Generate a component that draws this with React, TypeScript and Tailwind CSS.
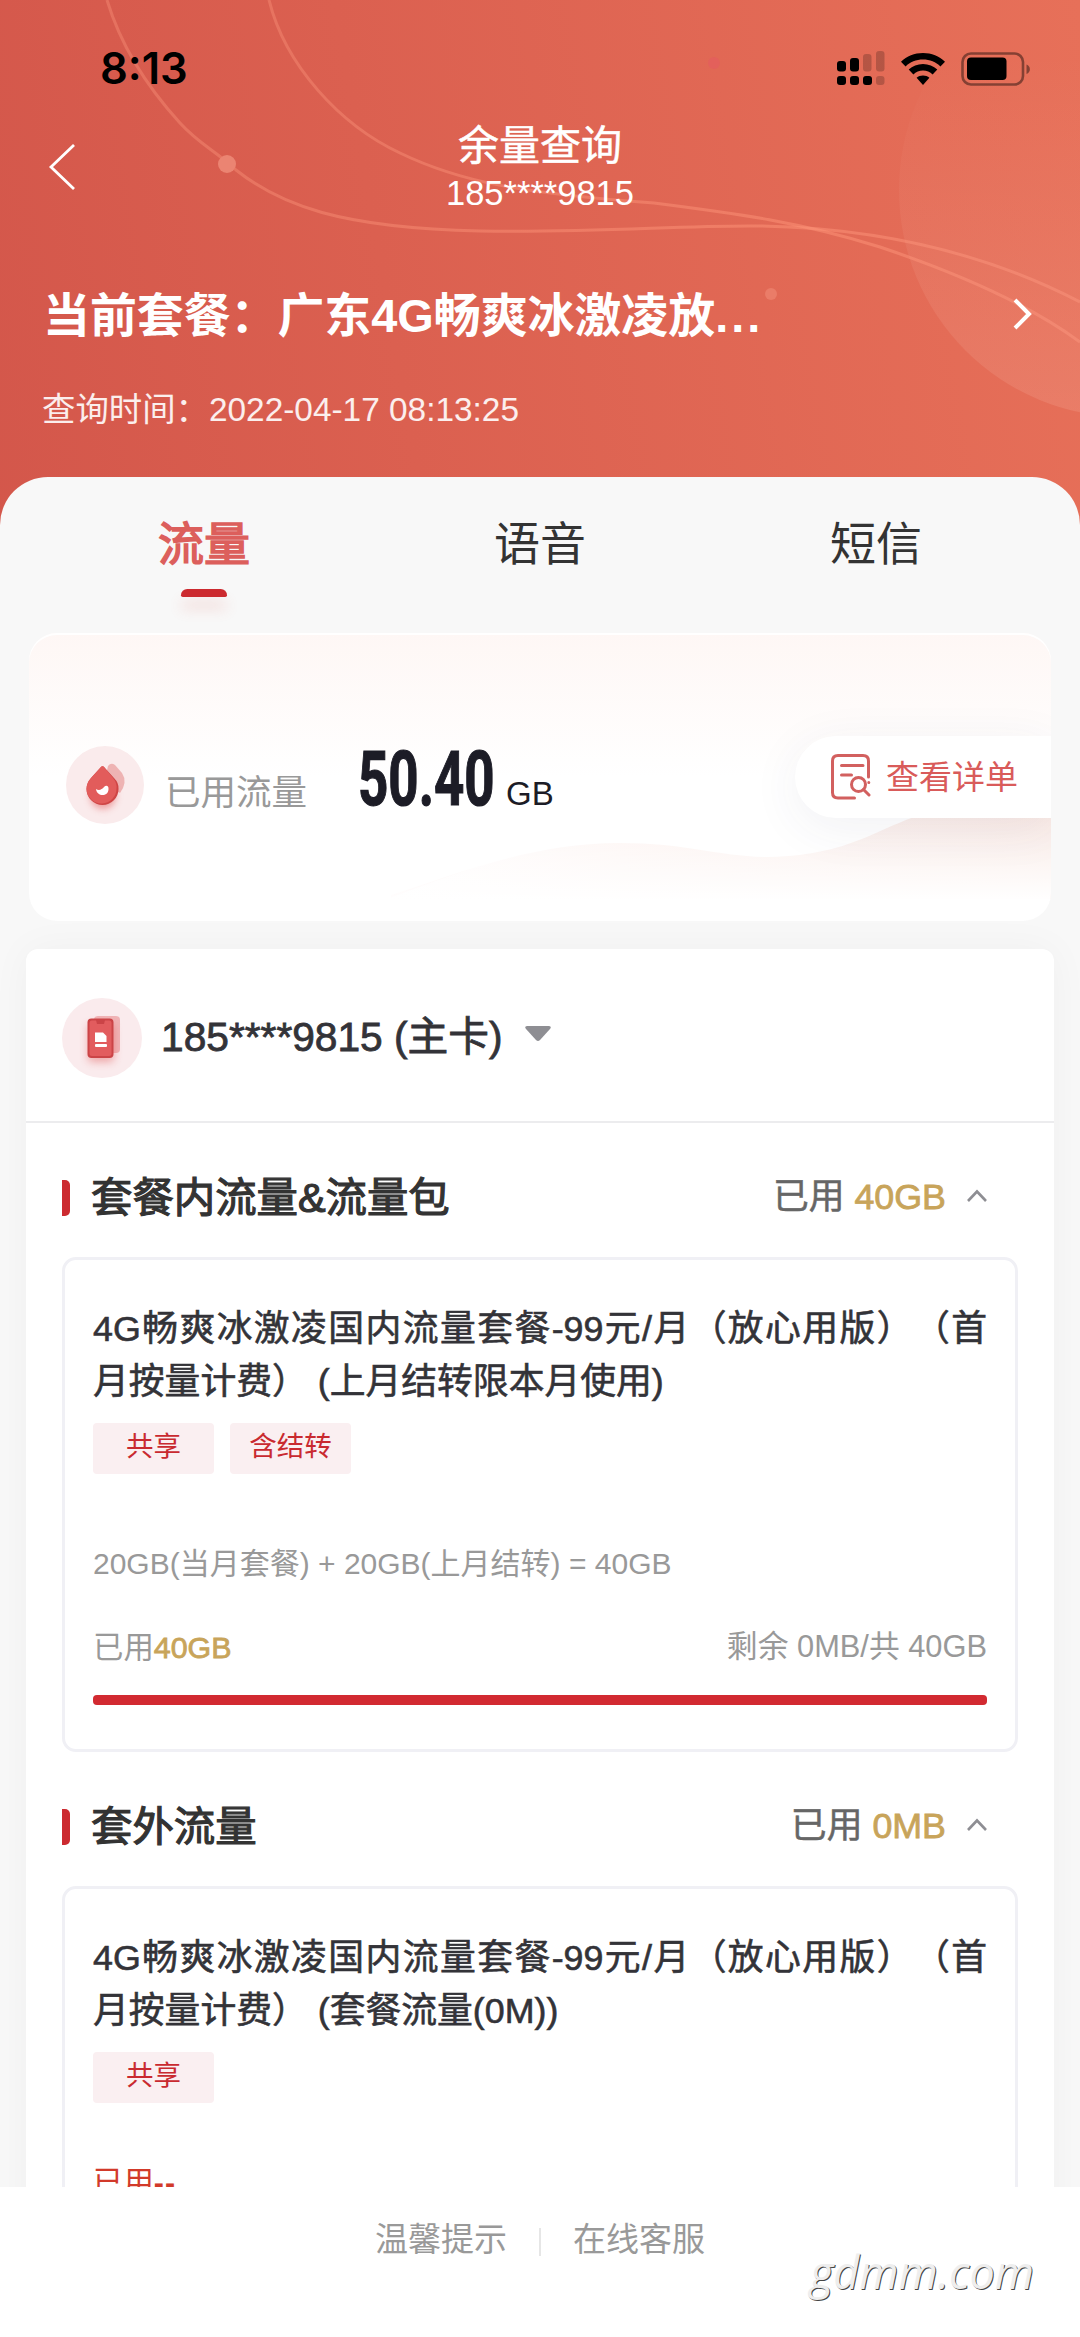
import { Fragment } from 'react';
import type { ReactNode } from 'react';

type Plan = {
    name: string;
    tags: string[];
    formula?: string;
    used: string;
    remain?: string;
    percent?: number;
};

type Section = {
    title: string;
    used: string;
    plan: Plan;
};

const tabs = ['流量', '语音', '短信'];

const sections: Section[] = [
    {
        title: '套餐内流量&流量包',
        used: '40GB',
        plan: {
            name: '4G畅爽冰激凌国内流量套餐-99元/月（放心用版）（首月按量计费） (上月结转限本月使用)',
            tags: ['共享', '含结转'],
            formula: '20GB(当月套餐) + 20GB(上月结转) = 40GB',
            used: '40GB',
            remain: '剩余 0MB/共 40GB',
            percent: 100,
        },
    },
    {
        title: '套外流量',
        used: '0MB',
        plan: {
            name: '4G畅爽冰激凌国内流量套餐-99元/月（放心用版）（首月按量计费） (套餐流量(0M))',
            tags: ['共享'],
            used: '--',
        },
    },
];

const HeaderArt = () => (
    <svg className="absolute left-0 top-0" width="1080" height="530" viewBox="0 0 1080 530" fill="none">
        <defs>
            <linearGradient id="orb" x1="0" y1="0" x2="0" y2="1">
                <stop offset="0.2" stopColor="#ffd0c0" stopOpacity="0" />
                <stop offset="1" stopColor="#ffd0c0" stopOpacity="0.15" />
            </linearGradient>
            <linearGradient id="trail" x1="0" y1="0" x2="1" y2="0">
                <stop offset="0" stopColor="#ff9a80" stopOpacity="0.35" />
                <stop offset="0.7" stopColor="#ff9478" stopOpacity="0.5" />
                <stop offset="1" stopColor="#ff9c84" stopOpacity="0.4" />
            </linearGradient>
        </defs>
        <circle cx="1126" cy="190" r="227" fill="url(#orb)" />
        <path
            d="M107 0C122 50 150 90 180 123C200 145 215 150 236 170C280 205 340 228 480 231C600 233 680 225 760 226C870 228 980 250 1080 302"
            stroke="url(#trail)"
            strokeWidth="3"
        />
        <path
            d="M269 0C285 65 340 125 400 153C460 182 520 193 654 203C740 214 800 222 880 247C960 274 1030 305 1080 342"
            stroke="url(#trail)"
            strokeWidth="3"
        />
        <circle cx="227" cy="164" r="9" fill="#eb8472" />
        <circle cx="771" cy="294" r="6" fill="#ea7c68" />
        <circle cx="714" cy="63" r="6" fill="#e3605b" />
    </svg>
);

const SignalIcon = () => (
    <svg width="48" height="36" viewBox="0 0 48 36">
        <rect x="0" y="10" width="9" height="10.5" rx="3" />
        <rect x="13" y="7" width="9" height="13.5" rx="3" />
        <g opacity="0.2">
            <rect x="26" y="3" width="8.5" height="17.5" rx="3" />
            <rect x="39" y="0" width="8.5" height="20.5" rx="3" />
            <rect x="39" y="25" width="8.5" height="9" rx="3" />
        </g>
        <rect x="0" y="25" width="9" height="9" rx="3" />
        <rect x="13" y="25" width="9" height="9" rx="3" />
        <rect x="26" y="25" width="9" height="9" rx="3" />
    </svg>
);

const WifiIcon = () => (
    <svg width="46" height="34" viewBox="0 0 46 34">
        <path d="M23 1C14.500 1 6.700 4.300 1 9.700L5.600 14.500C10 10.200 16.200 7.600 23 7.600C29.800 7.600 36 10.200 40.400 14.500L45 9.700C39.300 4.300 31.500 1 23 1Z" />
        <path d="M23 12C17.500 12 12.500 14.100 8.700 17.600L13.400 22.400C15.900 20 19.300 18.600 23 18.600C26.700 18.600 30.100 20 32.600 22.400L37.300 17.600C33.500 14.100 28.500 12 23 12Z" />
        <path d="M23 23.500C20.500 23.500 18.300 24.300 16.600 25.800L23 33L29.400 25.800C27.700 24.300 25.500 23.500 23 23.500Z" />
    </svg>
);

const BatteryIcon = () => (
    <svg width="70" height="34" viewBox="0 0 70 34">
        <rect x="1.500" y="1.500" width="60.500" height="31" rx="8.500" fill="none" stroke="#000" strokeOpacity="0.42" strokeWidth="2.600" />
        <rect x="6" y="5.500" width="39.500" height="22.500" rx="4" />
        <path d="M65.500 12.500C70 14 70 20.500 65.500 22Z" opacity="0.42" />
    </svg>
);

const DropIcon = () => (
    <svg width="78" height="78" viewBox="0 0 78 78" className="mt-[113px]">
        <defs>
            <filter id="dropGlow" x="-50%" y="-50%" width="200%" height="200%">
                <feGaussianBlur stdDeviation="3.500" />
            </filter>
        </defs>
        <circle cx="39" cy="39" r="39" fill="#faebec" />
        <path d="M42 20Q45 16 49 19L56 27Q62 36 54 47L38 38Z" fill="#eeb3b3" />
        <circle cx="37" cy="50" r="13" fill="#e05555" opacity="0.5" filter="url(#dropGlow)" />
        <path d="M34.500 21.500Q36.500 19 38.500 21.500L48 32Q53 37 52.500 43A16 16 0 0 1 20.500 43Q20.500 37 25 32Z" fill="#cf4545" />
        <path d="M34.500 21.500Q36.500 19 38.500 21.500L47 32Q51 37 50.500 42A15 15 0 0 1 20.500 43Q20.500 37 25 32Z" fill="#e25c5b" />
        <path d="M30 43C33 45 36 43.500 38 41C40 39 43 39.500 42.500 43.500C42 51 31 51 30 43Z" fill="#fff" />
    </svg>
);

const PhoneIcon = () => (
    <svg width="80" height="80" viewBox="0 0 80 80">
        <defs>
            <filter id="phoneGlow" x="-50%" y="-50%" width="200%" height="200%">
                <feGaussianBlur stdDeviation="4" />
            </filter>
        </defs>
        <circle cx="40" cy="40" r="40" fill="#faebed" />
        <rect x="32" y="18" width="26" height="37" rx="4" fill="#f0b4b6" />
        <rect x="26" y="26" width="26" height="38" rx="4" fill="#e05555" opacity="0.45" filter="url(#phoneGlow)" />
        <rect x="25.500" y="20.500" width="26" height="39.500" rx="4" fill="#cb4447" />
        <rect x="27.500" y="22.500" width="22" height="35.500" rx="2.500" fill="#e25c5e" />
        <path d="M34 22H43L42 26H35Z" fill="#cb4447" />
        <path d="M33 34.500H41L44.500 38V44H33Z" fill="#fff" />
        <rect x="33" y="46" width="12" height="3" rx="1" fill="#fff" />
    </svg>
);

const BillIcon = () => (
    <svg width="40" height="46" viewBox="0 0 40 46" fill="none" stroke="#d2605f" strokeWidth="3" strokeLinecap="round">
        <path d="M37.500 23V7Q37.500 1.500 32 1.500H7Q1.500 1.500 1.500 7V38.500Q1.500 44 7 44H23.500" />
        <path d="M10.500 11.500H32M10.500 21H20.500" />
        <circle cx="27.500" cy="30.500" r="7" />
        <path d="M32.500 35.500L38 41M37.800 28.500V28.600" />
    </svg>
);

const Wave = () => (
    <svg className="absolute left-0 top-0" width="1022" height="288" viewBox="0 0 1022 288">
        <defs>
            <linearGradient id="waveFade" x1="0" y1="0" x2="0" y2="1">
                <stop offset="0.300" stopColor="#fff" stopOpacity="0" />
                <stop offset="1" stopColor="#fff" />
            </linearGradient>
            <linearGradient id="waveTint" x1="0" y1="0" x2="1" y2="0">
                <stop offset="0" stopColor="#fffdfd" />
                <stop offset="0.350" stopColor="#fdf4f2" />
                <stop offset="1" stopColor="#f9e9e4" />
            </linearGradient>
        </defs>
        <path d="M362 262C420 244 500 210 590 210C660 210 690 224 740 224C830 222 850 190 915 175C960 165 990 165 1022 150V266H362Z" fill="url(#waveTint)" />
        <path d="M352 268C420 244 500 208 590 208C660 208 690 222 740 222C830 220 850 190 915 165C960 155 990 155 1022 140V268Z" fill="url(#waveFade)" />
    </svg>
);

const Tag = ({ children }: { children: ReactNode }) => (
    <span className="flex h-[51px] w-[121px] justify-center rounded bg-[#faeff1] text-[27.5px] leading-[48px] text-[#c92a30]">
        {children}
    </span>
);

const PlanCard = ({ plan }: { plan: Plan }) => (
    <div className="h-[495px] rounded-[14px] border-[3px] border-[#f0f0f5] px-7 pt-[43px]">
        <h3 className="text-justify text-[35.8px] leading-[53px] text-[#333338] [-webkit-text-stroke:0.6px_#333338] [text-spacing-trim:space-all]">
            {plan.name}
        </h3>
        <div className="mt-[14px] flex gap-4">
            {plan.tags.map((tag) => (
                <Tag key={tag}>{tag}</Tag>
            ))}
        </div>
        {plan.formula && (
            <p className="mt-[70px] text-[30px] leading-[40px] text-[#999]">{plan.formula}</p>
        )}
        {plan.remain ? (
            <div className="mt-[43px] flex items-center justify-between text-[30.4px] leading-[40px] text-[#999]">
                <span>
                    已用<span className="text-[#c8a45a] [-webkit-text-stroke:0.8px_#c8a45a]">{plan.used}</span>
                </span>
                <span className="text-[30.8px]">{plan.remain}</span>
            </div>
        ) : (
            <p className="mt-[59px] text-[30.4px] leading-[40px] text-[#d23a2a]">
                已用<span className="font-bold tracking-[1px]">{plan.used}</span>
            </p>
        )}
        {plan.percent !== undefined && (
            <div className="mt-[28px] h-[10px] rounded-[4px] bg-[#eee]">
                <div className="h-full rounded-[4px] bg-[#d22a31]" style={{ width: `${plan.percent}%` }} />
            </div>
        )}
    </div>
);

const StatusBar = () => (
    <div className="flex h-[112px] items-center pl-[100px] pr-[50px] pt-[25px]">
        <span className="font-['Inter'] text-[43.5px] font-semibold leading-none">8:13</span>
        <div className="ml-auto -mr-[1px] flex items-center gap-[15px]">
            <SignalIcon />
            <WifiIcon />
            <BatteryIcon />
        </div>
    </div>
);

const Header = () => (
    <header className="relative h-[477px] shrink-0">
        <StatusBar />
        <div className="relative flex h-[110px] items-center justify-center pt-1 text-white">
            <svg className="absolute left-[48px] top-[32px]" width="28" height="46" viewBox="0 0 28 46" fill="none" stroke="#fff" strokeWidth="2.800">
                <path d="M26 1L3 23L26 45" />
            </svg>
            <div className="text-center">
                <h1 className="text-[41px] leading-[48px] [-webkit-text-stroke:0.5px_#fff]">余量查询</h1>
                <p className="text-[34.5px] leading-[46px]">185****9815</p>
            </div>
        </div>
        <div className="mt-[54px] flex h-20 items-center justify-between pl-[43px] pr-[48px] text-white">
            <h2 className="text-[46.9px] font-bold leading-[80px] [text-spacing-trim:space-all]">
                当前套餐：广东4G畅爽冰激凌放<span className="tracking-[3px]">...</span>
            </h2>
            <svg className="-mt-1" width="20" height="32" viewBox="0 0 20 32" fill="none" stroke="#fff" strokeWidth="4">
                <path d="M3 2L17 16L3 30" />
            </svg>
        </div>
        <p className="mt-[34px] pl-[42px] text-[33.4px] leading-[40px] text-white/90 [text-spacing-trim:space-all]">
            查询时间：2022-04-17 08:13:25
        </p>
    </header>
);

const Tabs = () => (
    <nav className="grid grid-cols-3 px-9 pt-[37px]">
        {tabs.map((tab, i) => (
            <div key={tab} className="flex flex-col items-center">
                <span
                    className={
                        i === 0
                            ? 'text-[46px] leading-[60px] text-[#dc5f5c] [-webkit-text-stroke:1.6px_#dc5f5c]'
                            : 'text-[46px] leading-[60px] text-[#333]'
                    }
                >
                    {tab}
                </span>
                {i === 0 && (
                    <i className="mt-[15px] h-2 w-[46px] rounded-t-[7px] rounded-b-[2px] bg-[#cc2a2f] shadow-[0_12px_14px_rgba(220,90,80,0.18)]" />
                )}
            </div>
        ))}
    </nav>
);

const UsageCard = () => (
    <section className="relative mx-[29px] mt-9 flex h-[288px] overflow-hidden rounded-[28px] bg-linear-to-b from-[#fef7f5] to-white to-50% inset-shadow-[0_2px_0_#fff]">
        <Wave />
        <div className="relative flex flex-1 items-start pl-[37px]">
            <DropIcon />
            <div className="ml-[21px] mt-[101px] flex items-baseline">
                <span className="w-[193px] text-[35.5px] text-[#999]">已用流量</span>
                <span className="w-[148px]">
                    <b className="inline-block origin-left scale-x-[0.7] font-['Roboto'] text-[75.5px] leading-[90px] text-[#1c1c26] [-webkit-text-stroke:1.2px_#1c1c26]">50.40</b>
                </span>
                <span className="text-[33px] text-[#1c1c26]">GB</span>
            </div>
            <button className="ml-auto mt-[103px] flex h-[82px] w-[256px] items-center gap-[15px] rounded-l-full bg-white pl-[36px] text-[33px] leading-none text-[#d95b5a] shadow-[0_10px_50px_rgba(60,60,100,0.07)]">
                <BillIcon />
                查看详单
            </button>
        </div>
    </section>
);

const App = () => (
    <div className="relative flex h-[2337px] w-[1080px] flex-col overflow-hidden bg-[linear-gradient(80deg,#ce5047_0%,#db6050_50%,#e77059_100%)] font-['Liberation_Sans','Noto_Sans_CJK_SC',sans-serif]">
        <HeaderArt />
        <Header />
        <main className="relative min-h-0 flex-1 overflow-hidden rounded-t-[48px] bg-[#f8f8f8]">
            <Tabs />
            <UsageCard />
            <section className="mx-[26px] mt-7 rounded-t-xl bg-white shadow-[0_0_40px_rgba(0,0,0,0.04)]">
                <div className="flex h-[174px] items-center border-b-2 border-[#ececee] px-9 pt-[5px]">
                    <PhoneIcon />
                    <span className="ml-[19px] text-[40.7px] text-[#333338] [-webkit-text-stroke:0.8px_#333338]">185****9815 (主卡)</span>
                    <svg className="-mt-1.5 ml-[22px]" width="26" height="17" viewBox="0 0 26 17" fill="#8e8e93">
                        <path d="M2 0H24Q27 0.500 25 3L15 14Q13 16 11 14L1 3Q-1 0.500 2 0Z" />
                    </svg>
                </div>
                <div className="px-9">
                    {sections.map((section) => (
                        <Fragment key={section.title}>
                            <div className="flex h-[134px] items-center pt-4">
                                <i className="h-9 w-2 rounded-r-[5px] bg-[#cc2a30]" />
                                <h2 className="ml-[21px] text-[41.4px] text-[#333] [-webkit-text-stroke:1.2px_#333]">{section.title}</h2>
                                <span className="ml-auto text-[35.8px] text-[#666] [-webkit-text-stroke:0.5px_#666]">
                                    已用 <span className="text-[#c8a45a] [-webkit-text-stroke:0.8px_#c8a45a]">{section.used}</span>
                                </span>
                                <svg className="-mt-1 ml-[21px] mr-[31px]" width="20" height="14" viewBox="0 0 20 14" fill="none" stroke="#8e8e93" strokeWidth="2.600">
                                    <path d="M1 12L10 2.500L19 12" />
                                </svg>
                            </div>
                            <PlanCard plan={section.plan} />
                        </Fragment>
                    ))}
                </div>
            </section>
        </main>
        <footer className="relative flex h-[150px] shrink-0 items-start justify-center bg-white pt-[31px] text-[33px] leading-[44px] text-[#999]">
            <span>温馨提示</span>
            <i className="mx-8 mt-[10px] h-7 w-0.5 bg-[#e6e6e6]" />
            <span>在线客服</span>
            <span className="absolute right-[46px] top-[55px] font-['Open_Sans'] text-[45px] italic leading-[60px] text-[#eee] [text-shadow:1px_1px_0.5px_#444]">
                gdmm.com
            </span>
        </footer>
    </div>
);

export default App;
